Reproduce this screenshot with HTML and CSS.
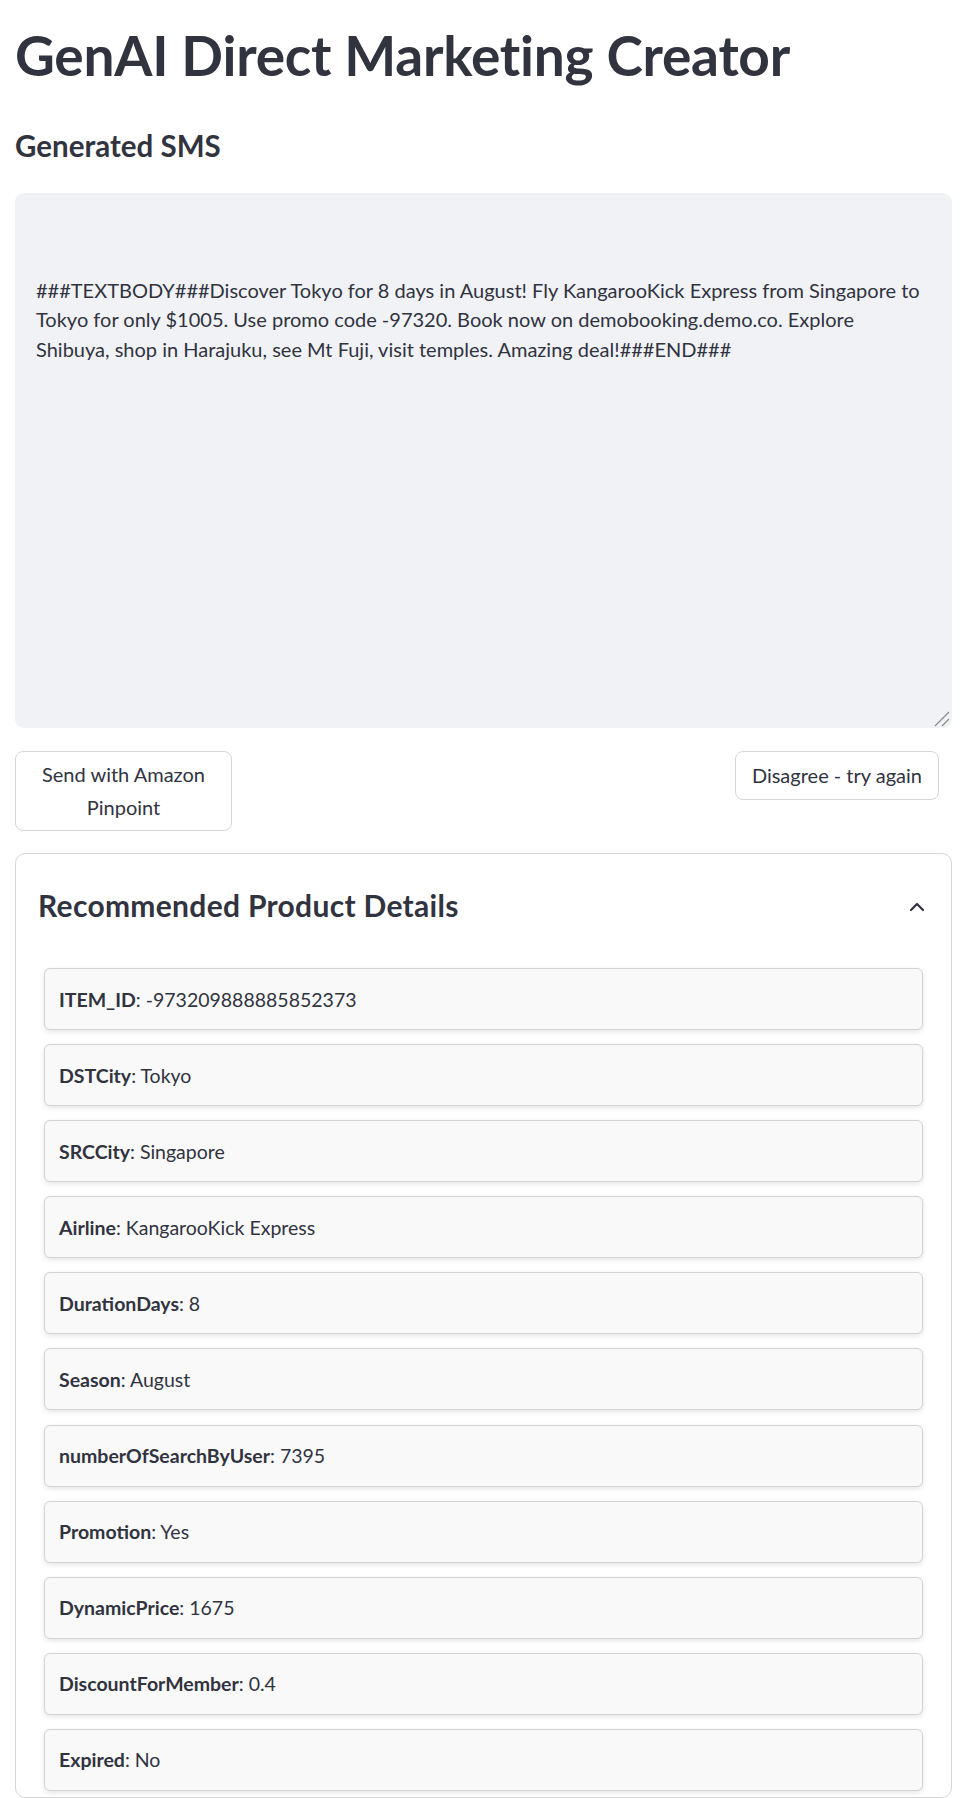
FILE: index.html
```html
<!DOCTYPE html>
<html lang="en">
<head>
<meta charset="utf-8">
<title>GenAI Direct Marketing Creator</title>
<link rel="stylesheet" href="styles.css">
</head>
<body>
<main class="page">
  <h1 class="title">GenAI Direct Marketing Creator</h1>
  <h3 class="subtitle">Generated SMS</h3>
  <div class="sms-box">
    <p class="sms-text">###TEXTBODY###Discover Tokyo for 8 days in August! Fly KangarooKick Express from Singapore to Tokyo for only $1005. Use promo code -97320. Book now on demobooking.demo.co. Explore Shibuya, shop in Harajuku, see Mt Fuji, visit temples. Amazing deal!###END###</p>
    <svg class="grip" width="16" height="16" viewBox="0 0 16 16" aria-hidden="true">
      <path d="M1 15 L15 1 M8 15 L15 8" stroke="#8a8a8a" stroke-width="1.2" fill="none"/>
    </svg>
  </div>
  <div class="actions">
    <button class="btn btn-send">Send with Amazon Pinpoint</button>
    <button class="btn btn-retry">Disagree - try again</button>
  </div>
  <section class="expander">
    <div class="exp-header">
      <h2 class="exp-title">Recommended Product Details</h2>
      <svg class="chevron" width="16" height="16" viewBox="0 0 16 16" aria-hidden="true">
        <path d="M2 11 L8 5 L14 11" stroke="#31333f" stroke-width="2.2" fill="none" stroke-linecap="round" stroke-linejoin="round"/>
      </svg>
    </div>
    <div class="exp-body">
      <div class="detail"><b>ITEM_ID</b>: -973209888885852373</div>
      <div class="detail"><b>DSTCity</b>: Tokyo</div>
      <div class="detail"><b>SRCCity</b>: Singapore</div>
      <div class="detail"><b>Airline</b>: KangarooKick Express</div>
      <div class="detail"><b>DurationDays</b>: 8</div>
      <div class="detail"><b>Season</b>: August</div>
      <div class="detail"><b>numberOfSearchByUser</b>: 7395</div>
      <div class="detail"><b>Promotion</b>: Yes</div>
      <div class="detail"><b>DynamicPrice</b>: 1675</div>
      <div class="detail"><b>DiscountForMember</b>: 0.4</div>
      <div class="detail"><b>Expired</b>: No</div>
    </div>
  </section>
</main>
</body>
</html>
```

FILE: styles.css
```css
* { box-sizing: border-box; }

html, body {
  margin: 0;
  padding: 0;
  background: #ffffff;
}

body {
  font-family: "Lato", "Open Sans", sans-serif;
  color: #31333f;
}

.page {
  padding: 0 20px 0 15px;
}

.title {
  margin: 0;
  padding-top: 22px;
  font-size: 55px;
  line-height: 66px;
  font-weight: 700;
  letter-spacing: -0.25px;
}

.subtitle {
  margin: 40px 0 0 0;
  font-size: 29.5px;
  line-height: 36px;
  font-weight: 700;
}

.sms-box {
  position: relative;
  margin-top: 29px;
  height: 535px;
  background: #f0f2f6;
  border-radius: 9px;
  padding: 83px 22px 0 21px;
}

.sms-text {
  margin: 0;
  font-size: 20px;
  line-height: 29.3px;
}

.grip {
  position: absolute;
  right: 2px;
  bottom: 1px;
}

.actions {
  display: flex;
  justify-content: space-between;
  align-items: flex-start;
  margin-top: 23px;
}

.btn {
  font-family: inherit;
  font-size: 20px;
  line-height: 33px;
  color: #31333f;
  background: #ffffff;
  border: 1px solid #d6d6d9;
  border-radius: 8px;
  padding: 6px 16px;
  text-align: center;
}

.btn-send {
  width: 217px;
}

.btn-retry {
  margin-right: 13px;
  padding: 7px 16px;
}

.expander {
  margin-top: 22px;
  border: 1px solid #d6d6d9;
  border-radius: 10px;
  padding-bottom: 6px;
}

.exp-header {
  display: flex;
  align-items: center;
  justify-content: space-between;
  padding: 33px 26px 0 22px;
}

.exp-title {
  margin: 0;
  font-size: 30px;
  line-height: 36px;
  font-weight: 700;
  letter-spacing: 0.3px;
}

.chevron {
  margin-top: 4px;
}

.exp-body {
  display: flex;
  flex-direction: column;
  gap: 14.1px;
  padding: 45px 28px 0 28px;
}

.detail {
  display: flex;
  align-items: center;
  height: 62px;
  padding: 0 14px;
  background: #f9f9f9;
  border: 1px solid #d3d3d3;
  border-radius: 6px;
  box-shadow: 0 2px 5px rgba(0, 0, 0, 0.10);
  font-size: 19.5px;
  white-space: pre;
}

.detail b {
  font-weight: 700;
}
```
